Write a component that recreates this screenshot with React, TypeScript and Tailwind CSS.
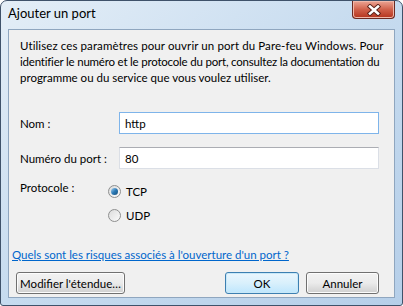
const font = { fontFamily: 'Lato, "Liberation Sans", Arial, sans-serif' }

function Radio({ checked, label }: { checked?: boolean; label: string }) {
    return (
        <div className="flex items-center gap-[5px]">
            <span className="relative flex h-[13px] w-[13px] items-center justify-center rounded-full border border-[#8e8f8f] bg-gradient-to-br from-[#dcdcdc] to-[#fbfbfb]">
                {checked && (
                    <span className="h-[7px] w-[7px] rounded-full bg-gradient-to-br from-[#a6d5f2] via-[#2a79b5] to-[#17507c]" />
                )}
            </span>
            <span className="text-black">{label}</span>
        </div>
    )
}

function Button({ children, primary, className }: { children: React.ReactNode; primary?: boolean; className?: string }) {
    return (
        <button
            className={
                'flex h-[22px] items-center justify-center rounded-[3px] border text-[11.5px] text-black ' +
                (primary
                    ? 'border-[#3c7fb1] bg-gradient-to-b from-[#eaf6fd] via-[#d9f0fc] to-[#bee6fd] shadow-[inset_0_0_0_1px_#c8e8f8] '
                    : 'border-[#707070] bg-gradient-to-b from-[#f2f2f2] via-[#ebebeb] to-[#cfcfcf] shadow-[inset_0_0_0_1px_#fcfcfc] ') +
                (className ?? '')
            }
        >
            {children}
        </button>
    )
}

export default function App() {
    return (
        <div
            style={font}
            className="flex h-[306px] w-[403px] flex-col rounded-t-[7px] rounded-b-[3px] border border-[#3f526a] bg-gradient-to-br from-[#e4eef7] via-[#c6dbef] to-[#b6cfe9] px-[7px] pb-[7px]"
        >
            <div className="flex h-[28px] items-start justify-between">
                <span className="mt-[4px] text-[13px] leading-[16px] text-black">Ajouter un port</span>
                <div className="flex h-[18px] w-[43px] items-center justify-center rounded-b-[4px] border border-t-0 border-[#6b2a22] bg-gradient-to-b from-[#eba595] via-[#d0604a] to-[#b4321b] shadow-[inset_0_0_0_1px_#f0b8aa]">
                    <svg width="16" height="12" viewBox="0 0 16 12">
                        <path d="M4 2.5 L12 9.5 M12 2.5 L4 9.5" stroke="#5a2118" strokeWidth="4.4" strokeLinecap="square" />
                        <path d="M4 2.5 L12 9.5 M12 2.5 L4 9.5" stroke="#ffffff" strokeWidth="2.6" strokeLinecap="square" />
                    </svg>
                </div>
            </div>
            <div className="flex flex-1 flex-col border border-[#8fa6bf] bg-[#f0f0f0] pl-[10px] pr-[15px] text-[11.5px] leading-[15px] text-black">
                <p className="mt-[8px] ml-[1px] whitespace-nowrap leading-[16px]">
                    <span className="tracking-[0.1px]">Utilisez ces paramètres pour ouvrir un port du Pare-feu Windows. Pour</span>
                    <br />
                    <span className="tracking-[-0.2px]">identifier le numéro et le protocole du port, consultez la documentation du</span>
                    <br />
                    programme ou du service que vous voulez utiliser.
                </p>
                <div className="mt-[26px] ml-[1px] flex items-center">
                    <span className="w-[99px]">Nom :</span>
                    <div className="flex h-[22px] flex-1 items-center border border-[#7eb4ea] bg-white px-[5px]">http</div>
                </div>
                <div className="mt-[13px] ml-[1px] flex items-center">
                    <span className="w-[99px]">Numéro du port :</span>
                    <div className="flex h-[22px] flex-1 items-center border border-[#dbdfe6] border-t-[#abadb3] bg-white px-[5px]">80</div>
                </div>
                <div className="mt-[11px] ml-[1px] flex items-start">
                    <span className="w-[88px]">Protocole :</span>
                    <div className="mt-[4px] flex flex-col gap-[9px]">
                        <Radio checked label="TCP" />
                        <Radio label="UDP" />
                    </div>
                </div>
                <a className="mt-[24px] -ml-[7px] w-fit whitespace-nowrap text-[#0066cc] underline">
                    Quels sont les risques associés à l'ouverture d'un port ?
                </a>
                <div className="mt-[10px] flex items-center">
                    <Button className="ml-[-3px] w-[109px]">Modifier l'étendue…</Button>
                    <Button primary className="ml-auto w-[74px]">OK</Button>
                    <Button className="ml-[7px] w-[73px]">Annuler</Button>
                </div>
            </div>
        </div>
    )
}
